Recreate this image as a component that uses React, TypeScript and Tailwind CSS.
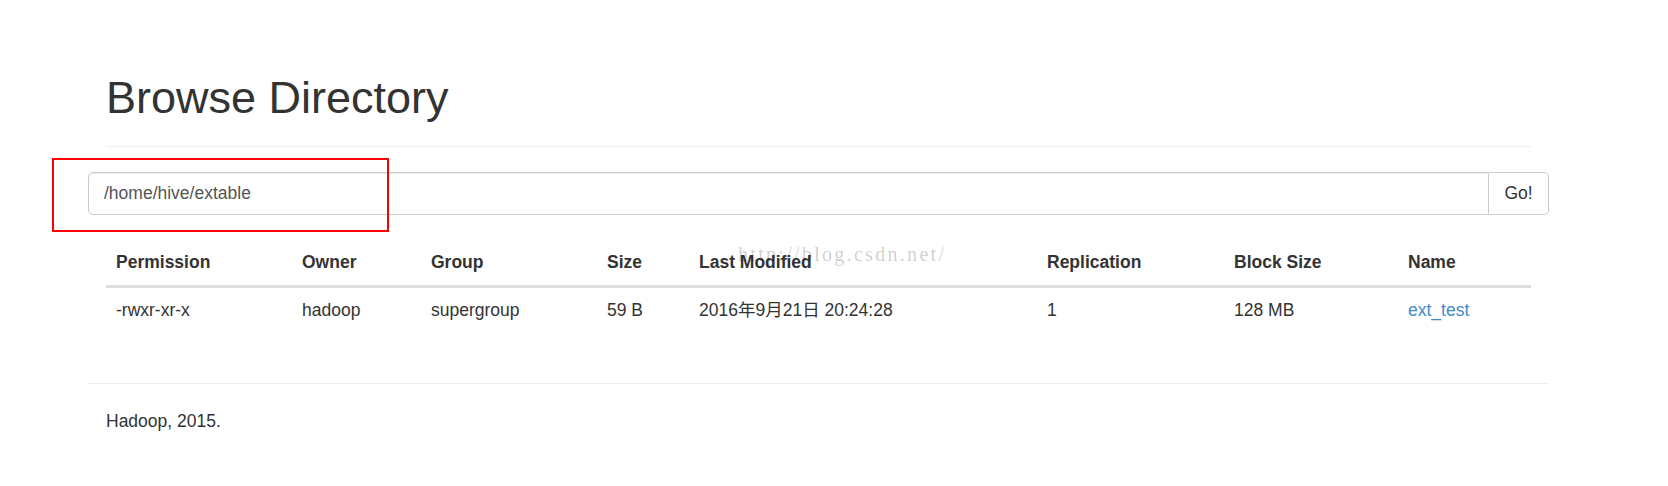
import React from "react";

const columns = [
  { label: "Permission", width: "w-[186px]" },
  { label: "Owner", width: "w-[129px]" },
  { label: "Group", width: "w-[176px]" },
  { label: "Size", width: "w-[92px]" },
  { label: "Last Modified", width: "w-[348px]" },
  { label: "Replication", width: "w-[187px]" },
  { label: "Block Size", width: "w-[174px]" },
  { label: "Name", width: "w-[133px]" },
];

const files = [
  {
    permission: "-rwxr-xr-x",
    owner: "hadoop",
    group: "supergroup",
    size: "59 B",
    modified: "2016年9月21日 20:24:28",
    replication: "1",
    blockSize: "128 MB",
    name: "ext_test",
  },
];

export default function App() {
  return (
    <div className="relative min-h-[486px] bg-white text-[17.5px] leading-[25px] text-[#333] font-['Liberation_Sans','Noto_Sans_CJK_SC',sans-serif]">
      <div className="ml-[88px] w-[1461px] pt-[73px]">
        <div className="mx-[18px] border-b border-[#eee] pb-[11px]">
          <h1 className="mb-[12.5px] text-[45px] font-normal leading-[49.5px]">Browse Directory</h1>
        </div>

        <div className="mt-[25px] flex h-[42.5px]">
          <input
            readOnly
            value="/home/hive/extable"
            className="h-full flex-1 rounded-l-[5px] border border-[#ccc] px-[15px] text-[17.5px] text-[#555] shadow-[inset_0_1px_1px_rgba(0,0,0,0.075)] outline-none"
          />
          <button className="h-full w-[60px] rounded-r-[5px] border border-l-0 border-[#ccc] bg-white text-[17.5px] text-[#333]">
            Go!
          </button>
        </div>

        <div className="mx-[18px] mt-[25px]">
          <table className="w-full table-fixed border-collapse text-left">
            <colgroup>
              {columns.map((c) => (
                <col key={c.label} className={c.width} />
              ))}
            </colgroup>
            <thead>
              <tr className="border-b-[3px] border-[#ddd]">
                {columns.map((c) => (
                  <th key={c.label} className="p-[10px] font-bold">
                    {c.label}
                  </th>
                ))}
              </tr>
            </thead>
            <tbody>
              {files.map((f) => (
                <tr key={f.name}>
                  <td className="p-[10px]">{f.permission}</td>
                  <td className="p-[10px]">{f.owner}</td>
                  <td className="p-[10px]">{f.group}</td>
                  <td className="p-[10px]">{f.size}</td>
                  <td className="p-[10px]">{f.modified}</td>
                  <td className="p-[10px]">{f.replication}</td>
                  <td className="p-[10px]">{f.blockSize}</td>
                  <td className="p-[10px]">
                    <a href="#" className="text-[#428bca]">
                      {f.name}
                    </a>
                  </td>
                </tr>
              ))}
            </tbody>
          </table>
        </div>

        <div className="mt-[50px] border-t border-[#eee] pt-[25px]">
          <p className="px-[18px]">Hadoop, 2015.</p>
        </div>
      </div>

      {/* annotation box + blog watermark from the screenshot */}
      <div className="pointer-events-none absolute left-[52px] top-[158px] h-[74px] w-[337px] border-2 border-[#ff0000]" />
      <div className="pointer-events-none absolute left-[738px] top-[244px] font-['Liberation_Serif',serif] text-[20px] leading-[20px] tracking-[2.3px] text-black/20">
        http://blog.csdn.net/
      </div>
    </div>
  );
}
